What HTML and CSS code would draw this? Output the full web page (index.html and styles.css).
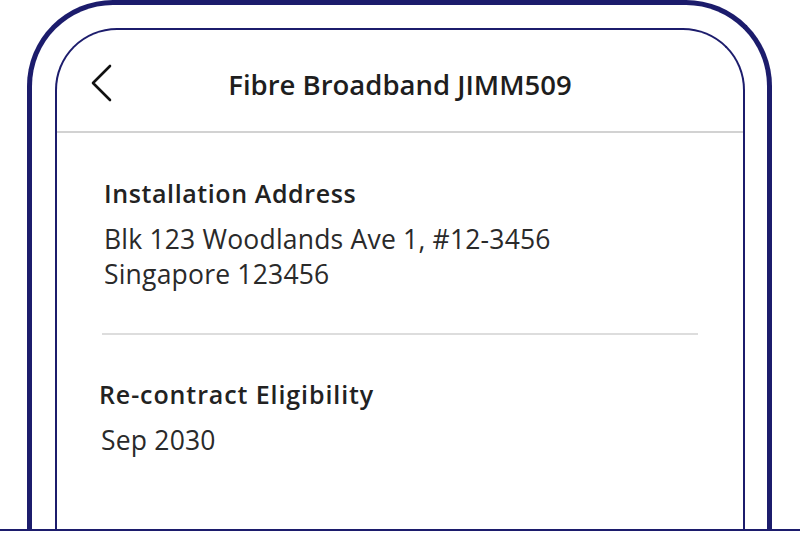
FILE: index.html
```html
<!DOCTYPE html>
<html lang="en">
<head>
    <meta charset="UTF-8">
    <meta name="viewport" content="width=device-width, initial-scale=1.0">
    <title>Fibre Broadband</title>
    <link rel="stylesheet" href="styles.css">
</head>
<body>
    <div class="device">
        <div class="phone">
            <div class="screen">
                <!-- Top bar -->
                <div class="topbar">
                    <a class="back" href="#">
                        <svg width="22" height="40" viewBox="0 0 22 40">
                            <path d="M19 2 L2 19 L19 36" fill="none" stroke="#111" stroke-width="2.6" stroke-linecap="round" stroke-linejoin="round"/>
                        </svg>
                    </a>
                    <h1 class="title">Fibre Broadband JIMM509</h1>
                    <span></span>
                </div>

                <div class="details">
                    <div class="item">
                        <h2>Installation Address</h2>
                        <p>Blk 123 Woodlands Ave 1, #12-3456<br>Singapore 123456</p>
                    </div>
                    <div class="divider"></div>
                    <div class="item item-shift">
                        <h2>Re-contract Eligibility</h2>
                        <p>Sep 2030</p>
                    </div>
                </div>
            </div>
        </div>
    </div>
    <div class="baseline"></div>
</body>
</html>
```

FILE: styles.css
```css
body {
    margin: 0;
    background-color: #ffffff;
    font-family: "Open Sans", Lato, sans-serif;
    color: #222222;
    overflow: hidden;
}

.device {
    padding: 0 28px 0 27px;
}
/* outer phone frame */
.phone {
    box-sizing: border-box;
    height: 529px;
    border: 5px solid #1c1c6c;
    border-bottom: none;
    border-radius: 86px 86px 0 0;
    padding: 23px 22px 0 23px;
}
/* inner screen frame */
.screen {
    height: 100%;
    border: 2px solid #1c1c6c;
    border-bottom: none;
    border-radius: 62px 62px 0 0;
    box-sizing: border-box;
}
.baseline {
    height: 2px;
    background-color: #1c1c6c;
}

.topbar {
    display: grid;
    grid-template-columns: 1fr auto 1fr;
    align-items: center;
    height: 101px;
    border-bottom: 2px solid #d2d2d2;
}
.back {
    display: flex;
    padding-left: 34px;
    padding-top: 7px;
}
.title {
    margin: 0;
    padding-top: 7px;
    font-size: 27.5px;
    font-weight: 600;
    color: #1e1e1e;
}

.details {
    padding: 0 45px 0 47px;
}
.item {
    padding-top: 44px;
}
.item h2 {
    margin: 0;
    font-size: 25px;
    font-weight: 600;
    line-height: 32px;
    letter-spacing: 0.6px;
    color: #222222;
}
.item p {
    margin: 13px 0 0;
    font-size: 26.5px;
    line-height: 35px;
    letter-spacing: 0.2px;
    color: #2a2a2a;
}
.divider {
    height: 2px;
    margin: 41px 0 0 -2px;
    background-color: #dddddd;
}
.item-shift {
    margin-left: -5px;
    padding-top: 43px;
}
.item-shift h2 {
    letter-spacing: 0.9px;
}
.item-shift p {
    margin: 13px 0 0 2px;
}
```
